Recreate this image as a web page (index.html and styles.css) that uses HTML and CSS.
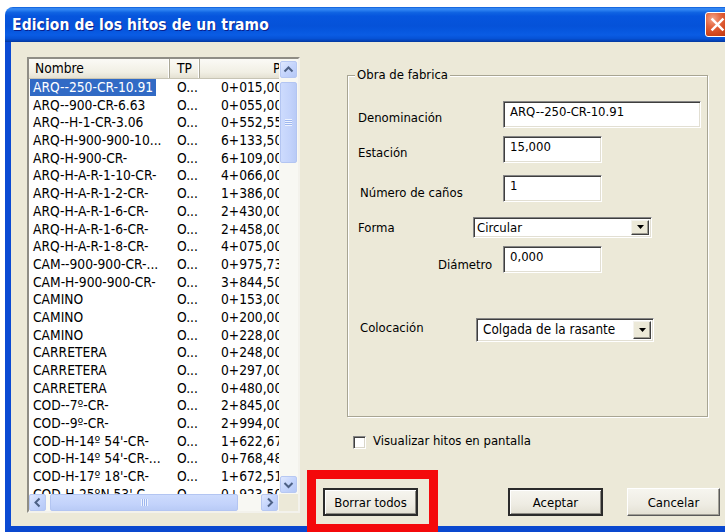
FILE: index.html
```html
<!DOCTYPE html>
<html lang="es">
<head>
<meta charset="utf-8">
<title>Edicion de los hitos de un tramo</title>
<link rel="stylesheet" href="styles.css">
</head>
<body>
<div class="window">
  <div class="titlebar">
    <span class="title">Edicion de los hitos de un tramo</span>
    <span class="close-btn">
      <svg width="25" height="25" viewBox="0 0 25 25"><path d="M7 7 L18 18 M18 7 L7 18" stroke="#fff" stroke-width="2.6" stroke-linecap="square"/></svg>
    </span>
  </div>
  <div class="frame">
    <div class="listbox">
      <div class="list-view">
        <div class="list-header">
          <div class="hcell c-name">Nombre</div>
          <div class="hcell c-tp">TP</div>
          <div class="hcell c-pk">P.K.</div>
        </div>
        <div class="rows">
          <div class="row selected"><span class="c-name"><span class="item">ARQ--250-CR-10.91</span></span><span class="c-tp">O...</span><span class="c-pk">0+015,000</span></div>
          <div class="row"><span class="c-name"><span class="item">ARQ--900-CR-6.63</span></span><span class="c-tp">O...</span><span class="c-pk">0+055,000</span></div>
          <div class="row"><span class="c-name"><span class="item">ARQ--H-1-CR-3.06</span></span><span class="c-tp">O...</span><span class="c-pk">0+552,550</span></div>
          <div class="row"><span class="c-name"><span class="item">ARQ-H-900-900-10...</span></span><span class="c-tp">O...</span><span class="c-pk">6+133,500</span></div>
          <div class="row"><span class="c-name"><span class="item">ARQ-H-900-CR-</span></span><span class="c-tp">O...</span><span class="c-pk">6+109,000</span></div>
          <div class="row"><span class="c-name"><span class="item">ARQ-H-A-R-1-10-CR-</span></span><span class="c-tp">O...</span><span class="c-pk">4+066,000</span></div>
          <div class="row"><span class="c-name"><span class="item">ARQ-H-A-R-1-2-CR-</span></span><span class="c-tp">O...</span><span class="c-pk">1+386,000</span></div>
          <div class="row"><span class="c-name"><span class="item">ARQ-H-A-R-1-6-CR-</span></span><span class="c-tp">O...</span><span class="c-pk">2+430,000</span></div>
          <div class="row"><span class="c-name"><span class="item">ARQ-H-A-R-1-6-CR-</span></span><span class="c-tp">O...</span><span class="c-pk">2+458,000</span></div>
          <div class="row"><span class="c-name"><span class="item">ARQ-H-A-R-1-8-CR-</span></span><span class="c-tp">O...</span><span class="c-pk">4+075,000</span></div>
          <div class="row"><span class="c-name"><span class="item">CAM--900-900-CR-...</span></span><span class="c-tp">O...</span><span class="c-pk">0+975,730</span></div>
          <div class="row"><span class="c-name"><span class="item">CAM-H-900-900-CR-</span></span><span class="c-tp">O...</span><span class="c-pk">3+844,500</span></div>
          <div class="row"><span class="c-name"><span class="item">CAMINO</span></span><span class="c-tp">O...</span><span class="c-pk">0+153,000</span></div>
          <div class="row"><span class="c-name"><span class="item">CAMINO</span></span><span class="c-tp">O...</span><span class="c-pk">0+200,000</span></div>
          <div class="row"><span class="c-name"><span class="item">CAMINO</span></span><span class="c-tp">O...</span><span class="c-pk">0+228,000</span></div>
          <div class="row"><span class="c-name"><span class="item">CARRETERA</span></span><span class="c-tp">O...</span><span class="c-pk">0+248,000</span></div>
          <div class="row"><span class="c-name"><span class="item">CARRETERA</span></span><span class="c-tp">O...</span><span class="c-pk">0+297,000</span></div>
          <div class="row"><span class="c-name"><span class="item">CARRETERA</span></span><span class="c-tp">O...</span><span class="c-pk">0+480,000</span></div>
          <div class="row"><span class="c-name"><span class="item">COD--7º-CR-</span></span><span class="c-tp">O...</span><span class="c-pk">2+845,000</span></div>
          <div class="row"><span class="c-name"><span class="item">COD--9º-CR-</span></span><span class="c-tp">O...</span><span class="c-pk">2+994,000</span></div>
          <div class="row"><span class="c-name"><span class="item">COD-H-14º 54'-CR-</span></span><span class="c-tp">O...</span><span class="c-pk">1+622,670</span></div>
          <div class="row"><span class="c-name"><span class="item">COD-H-14º 54'-CR-...</span></span><span class="c-tp">O...</span><span class="c-pk">0+768,480</span></div>
          <div class="row"><span class="c-name"><span class="item">COD-H-17º 18'-CR-</span></span><span class="c-tp">O...</span><span class="c-pk">1+672,510</span></div>
          <div class="row"><span class="c-name"><span class="item">COD-H-25ºN 53' C...</span></span><span class="c-tp">O...</span><span class="c-pk">0+923,500</span></div>
        </div>
      </div>
      <div class="vscroll">
        <div class="sb-btn">
          <svg width="17" height="17" viewBox="0 0 17 17"><polyline points="4.5,10.5 8.5,6.5 12.5,10.5" fill="none" stroke="#4d6185" stroke-width="2"/></svg>
        </div>
        <div class="v-thumb"><span class="grip-h"></span></div>
        <div class="sb-btn sb-end">
          <svg width="17" height="17" viewBox="0 0 17 17"><polyline points="4.5,7 8.5,11 12.5,7" fill="none" stroke="#4d6185" stroke-width="2"/></svg>
        </div>
      </div>
      <div class="hscroll">
        <div class="sb-btn">
          <svg width="17" height="17" viewBox="0 0 17 17"><polyline points="10.5,4.5 6.5,8.5 10.5,12.5" fill="none" stroke="#4d6185" stroke-width="2"/></svg>
        </div>
        <div class="h-thumb"><span class="grip-v"></span></div>
        <div class="sb-btn sb-end">
          <svg width="17" height="17" viewBox="0 0 17 17"><polyline points="7,4.5 11,8.5 7,12.5" fill="none" stroke="#4d6185" stroke-width="2"/></svg>
        </div>
      </div>
      <div class="corner"></div>
    </div>

    <div class="side">
      <div class="group">
        <div class="group-title">Obra de fabrica</div>

        <div class="field f-den">
          <span class="lbl">Denominación</span>
          <div class="edit w-long">ARQ--250-CR-10.91</div>
        </div>
        <div class="field f-est">
          <span class="lbl">Estación</span>
          <div class="edit w-short">15,000</div>
        </div>
        <div class="field f-num">
          <span class="lbl lbl-num">Número de caños</span>
          <div class="edit w-short">1</div>
        </div>
        <div class="field f-forma">
          <span class="lbl lbl-combo lbl-forma">Forma</span>
          <div class="combo combo-forma">
            <span class="combo-text">Circular</span>
            <span class="drop"><svg width="9" height="5" viewBox="0 0 9 5"><polygon points="1,0 8,0 4.5,4" fill="#000"/></svg></span>
          </div>
        </div>
        <div class="field f-dia">
          <span class="lbl lbl-dia">Diámetro</span>
          <div class="edit w-short">0,000</div>
        </div>
        <div class="field f-col">
          <span class="lbl lbl-combo lbl-col">Colocación</span>
          <div class="combo combo-col">
            <span class="combo-text">Colgada de la rasante</span>
            <span class="drop"><svg width="9" height="5" viewBox="0 0 9 5"><polygon points="1,0 8,0 4.5,4" fill="#000"/></svg></span>
          </div>
        </div>
      </div>

      <div class="check-row">
        <span class="checkbox"></span>
        <span class="check-label">Visualizar hitos en pantalla</span>
      </div>

      <div class="buttons">
        <div class="btn btn-default btn-borrar">Borrar todos</div>
        <div class="btn btn-default btn-aceptar">Aceptar</div>
        <div class="btn btn-cancelar">Cancelar</div>
        <div class="mark"></div>
      </div>
    </div>
  </div>
</div>
</body>
</html>
```
FILE: styles.css
```css
html, body {
  margin: 0;
  padding: 0;
}

body {
  width: 725px;
  height: 532px;
  overflow: hidden;
  background: #fff;
  font-family: "DejaVu Sans Condensed", "DejaVu Sans", sans-serif;
  font-stretch: condensed;
  font-size: 13px;
  color: #000;
}

/* ---- window chrome ---- */
.window {
  margin: 7px 0 0 5px;
  width: 740px;
}

.titlebar {
  height: 35px;
  box-sizing: border-box;
  border-radius: 8px 8px 0 0;
  padding-left: 7px;
  display: flex;
  align-items: center;
  background: linear-gradient(to bottom,
    #0a5bd8 0%, #3a8cf5 5%, #2a7ff0 9%, #0f63e2 16%, #0655dd 26%,
    #0552d9 55%, #0758e0 70%, #0a5ce4 80%, #0652d6 90%, #0443b8 96%, #03379c 100%);
}

.title {
  color: #fff;
  font-weight: bold;
  font-size: 15.5px;
  letter-spacing: 0.1px;
  text-shadow: 1px 1px 0 #0a1f8a;
}

.close-btn {
  margin-left: auto;
  margin-right: 15px;
  width: 25px;
  height: 25px;
  box-sizing: border-box;
  border: 1px solid #fff;
  border-radius: 3px;
  background: radial-gradient(circle at 30% 25%, #f4a58a 0%, #e3643d 35%, #d2471d 65%, #b43510 100%);
  display: flex;
  align-items: center;
  justify-content: center;
}

.close-btn svg {
  display: block;
}

.frame {
  height: 490px;
  box-sizing: border-box;
  display: flex;
  align-items: flex-start;
  padding: 15px 0 0 16px;
  background: #ece9d8;
  border-left: 6px solid #0b4ad3;
  border-bottom: 6px solid #0a48cf;
}

/* ---- list view ---- */
.listbox {
  flex: none;
  width: 273px;
  height: 456px;
  box-sizing: border-box;
  border: 2px solid;
  border-color: #8f8d85 #f3f2ec #f3f2ec #8f8d85;
  background: #fff;
  display: grid;
  grid-template-columns: 250px 19px;
  grid-template-rows: 435px 17px;
  font-size: 13.7px;
}

.list-view {
  overflow: hidden;
  white-space: nowrap;
}

.list-header {
  display: grid;
  grid-template-columns: 141px 30px 200px;
  height: 20px;
  box-sizing: border-box;
  background: linear-gradient(to bottom, #fbfaf6 0%, #f1efe4 70%, #e4e1d2 100%);
  border-bottom: 1px solid #c7c4b4;
}

.hcell {
  line-height: 19px;
  border-right: 1px solid #aaa797;
  box-shadow: inset -1px 0 0 #fff;
}

.hcell.c-name { padding-left: 6px; }
.hcell.c-tp { padding-left: 7px; }
.hcell.c-pk { padding-left: 73px; border-right: none; }

.row {
  display: grid;
  grid-template-columns: 141px 30px 120px;
  height: 17.7px;
  line-height: 17.7px;
}

.row .c-name { padding-left: 1px; }
.row .c-tp { padding-left: 7px; }
.row .c-pk { padding-left: 21px; }

.item {
  display: inline-block;
  padding: 0 3px;
  line-height: 17px;
}

.row.selected .item {
  background: #316ac5;
  color: #fff;
}

/* ---- scroll bars ---- */
.vscroll {
  display: flex;
  flex-direction: column;
  padding: 2px 1px 1px 1px;
  background: #f8f8f3;
}

.hscroll {
  display: flex;
  padding: 0 1px 0 0;
  background: #f8f8f3;
}

.corner {
  background: #ece9d8;
}

.sb-btn {
  width: 17px;
  height: 17px;
  box-sizing: border-box;
  border: 1px solid #b7c8f2;
  border-radius: 2px;
  background: linear-gradient(to bottom right, #dfe8fe 0%, #c5d5fc 50%, #b5c8f6 100%);
  display: flex;
  align-items: center;
  justify-content: center;
}

.sb-btn svg {
  display: block;
  margin: -1px;
}

.sb-end {
  margin-top: auto;
  margin-left: auto;
}

.vscroll .sb-end {
  margin-left: 0;
}

.v-thumb {
  margin-top: 4px;
  height: 81px;
  box-sizing: border-box;
  border: 1px solid #b3c5f2;
  border-radius: 2px;
  background: linear-gradient(to right, #cddbfd 0%, #c3d3fb 60%, #b9cbf6 100%);
  display: flex;
  align-items: center;
  justify-content: center;
}

.h-thumb {
  margin-left: 4px;
  width: 188px;
  height: 17px;
  box-sizing: border-box;
  border: 1px solid #b3c5f2;
  border-radius: 2px;
  background: linear-gradient(to bottom, #cddbfd 0%, #c3d3fb 60%, #b9cbf6 100%);
  display: flex;
  align-items: center;
  justify-content: center;
}

.grip-h {
  width: 7px;
  height: 7px;
  background: repeating-linear-gradient(to bottom, #eef3fe 0 1px, #9db6ee 1px 2px);
}

.grip-v {
  width: 7px;
  height: 7px;
  background: repeating-linear-gradient(to right, #eef3fe 0 1px, #9db6ee 1px 2px);
}

/* ---- right side ---- */
.side {
  margin-left: 23px;
  width: 410px;
  display: flex;
  flex-direction: column;
}

.group {
  margin: 18px 0 0 24px;
  width: 361px;
  height: 342px;
  box-sizing: border-box;
  border: 1px solid #a8a593;
  box-shadow: inset 1px 1px 0 #fff, 1px 1px 0 #fff;
}

.group-title {
  width: fit-content;
  margin: -9px 0 0 7px;
  padding: 0 2px;
  line-height: 16px;
  background: #ece9d8;
}

.field {
  display: flex;
  align-items: flex-start;
  padding-left: 10px;
}

.lbl {
  flex: none;
  width: 145px;
  box-sizing: border-box;
  padding-top: 9px;
  line-height: 16px;
}

.lbl-num { padding-left: 2px; padding-top: 10px; }
.lbl-dia { padding-left: 80px; padding-top: 11px; }
.lbl-combo { padding-top: 3px; }
.lbl-forma { width: 115px; }
.lbl-col { width: 118px; padding-left: 2px; padding-top: 2px; }

.f-den { margin-top: 18px; }
.f-est { margin-top: 8px; }
.f-num { margin-top: 12px; }
.f-forma { margin-top: 15px; }
.f-dia { margin-top: 8px; }
.f-col { margin-top: 45px; }

.edit {
  height: 27px;
  box-sizing: border-box;
  background: #fff;
  border: 1px solid;
  border-color: #858585 #ffffff #ffffff #858585;
  box-shadow: inset 1px 1px 0 #3e3e3e, inset -1px -1px 0 #e2dfd3;
  padding: 2px 0 0 6px;
  line-height: 16px;
}

.w-long { width: 198px; }
.w-short { width: 99px; }

.combo {
  box-sizing: border-box;
  background: #fff;
  border: 1px solid;
  border-color: #858585 #ffffff #ffffff #858585;
  box-shadow: inset 1px 1px 0 #3e3e3e, inset -1px -1px 0 #e2dfd3;
  display: flex;
  align-items: center;
  padding: 2px 2px 2px 3px;
}

.combo-forma { width: 179px; height: 21px; }
.combo-col { width: 178px; height: 24px; padding-left: 6px; font-size: 13.4px; }

.combo-text {
  line-height: 16px;
}

.drop {
  margin-left: auto;
  width: 18px;
  align-self: stretch;
  box-sizing: border-box;
  background: #ece9d8;
  border: 1px solid;
  border-color: #f4f3ee #404040 #404040 #f4f3ee;
  box-shadow: inset -1px -1px 0 #9c9a90;
  display: flex;
  align-items: center;
  justify-content: center;
}

.drop svg {
  display: block;
}

.check-row {
  margin: 18px 0 0 30px;
  display: flex;
  align-items: center;
}

.checkbox {
  width: 13px;
  height: 13px;
  box-sizing: border-box;
  background: #fff;
  border: 1px solid;
  border-color: #858585 #ffffff #ffffff #858585;
  box-shadow: inset 1px 1px 0 #404040, inset -1px -1px 0 #d9d6c9;
}

.check-label {
  margin-left: 7px;
  line-height: 16px;
  margin-top: -2px;
}

/* ---- dialog buttons ---- */
.buttons {
  position: relative;
  margin-top: 39px;
  display: flex;
}

.btn {
  height: 28px;
  box-sizing: border-box;
  display: flex;
  align-items: center;
  justify-content: center;
  background: linear-gradient(to bottom, #f6f5ef 0%, #eeece3 60%, #e3e0d3 100%);
}

.btn-default {
  border: 2px solid #2b2b2b;
  box-shadow: inset 1px 1px 0 #fff, inset -1px -1px 0 #8e8c84;
}

.btn-cancelar {
  width: 93px;
  margin-left: 24px;
  border: 1px solid;
  border-color: #ffffff #5a5a5a #5a5a5a #ffffff;
  box-shadow: inset -1px -1px 0 #a19f96;
}

.btn-borrar { width: 95px; }
.btn-aceptar { width: 95px; margin-left: 90px; }

/* red highlight frame drawn over the delete button */
.mark {
  position: absolute;
  left: -16px;
  top: -18px;
  width: 131px;
  height: 63px;
  box-sizing: border-box;
  border: 9px solid #f4090b;
}
```
